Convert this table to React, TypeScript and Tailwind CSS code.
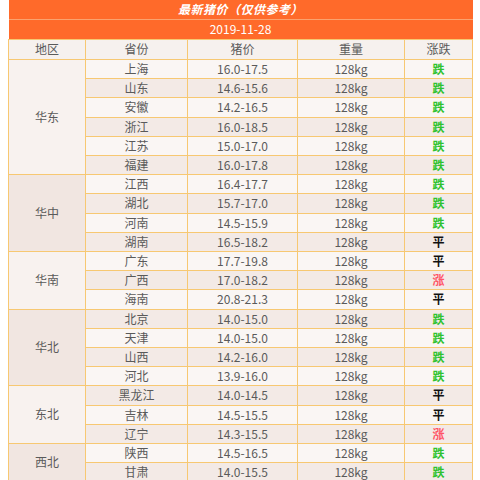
import React from 'react';

type Row = { prov: string; price: string; trend: '跌' | '平' | '涨' };
type Group = { region: string; rows: Row[] };

const groups: Group[] = [
  {
    region: '华东',
    rows: [
      { prov: '上海', price: '16.0-17.5', trend: '跌' },
      { prov: '山东', price: '14.6-15.6', trend: '跌' },
      { prov: '安徽', price: '14.2-16.5', trend: '跌' },
      { prov: '浙江', price: '16.0-18.5', trend: '跌' },
      { prov: '江苏', price: '15.0-17.0', trend: '跌' },
      { prov: '福建', price: '16.0-17.8', trend: '跌' },
    ],
  },
  {
    region: '华中',
    rows: [
      { prov: '江西', price: '16.4-17.7', trend: '跌' },
      { prov: '湖北', price: '15.7-17.0', trend: '跌' },
      { prov: '河南', price: '14.5-15.9', trend: '跌' },
      { prov: '湖南', price: '16.5-18.2', trend: '平' },
    ],
  },
  {
    region: '华南',
    rows: [
      { prov: '广东', price: '17.7-19.8', trend: '平' },
      { prov: '广西', price: '17.0-18.2', trend: '涨' },
      { prov: '海南', price: '20.8-21.3', trend: '平' },
    ],
  },
  {
    region: '华北',
    rows: [
      { prov: '北京', price: '14.0-15.0', trend: '跌' },
      { prov: '天津', price: '14.0-15.0', trend: '跌' },
      { prov: '山西', price: '14.2-16.0', trend: '跌' },
      { prov: '河北', price: '13.9-16.0', trend: '跌' },
    ],
  },
  {
    region: '东北',
    rows: [
      { prov: '黑龙江', price: '14.0-14.5', trend: '平' },
      { prov: '吉林', price: '14.5-15.5', trend: '平' },
      { prov: '辽宁', price: '14.3-15.5', trend: '涨' },
    ],
  },
  {
    region: '西北',
    rows: [
      { prov: '陕西', price: '14.5-16.5', trend: '跌' },
      { prov: '甘肃', price: '14.0-15.5', trend: '跌' },
    ],
  },
];

const trendClass = {
  跌: 'text-[#2fc22f] font-bold',
  平: 'text-[#111111] font-bold',
  涨: 'text-[#ff5566] font-bold',
};

const cell = 'border border-[#f7c872] text-center align-middle p-0';

export default function App() {
  let idx = 0;
  return (
    <div
      className="w-[480px] h-[480px] overflow-hidden bg-white px-[8px]"
      style={{ fontFamily: '"Noto Sans CJK SC", "Noto Sans", sans-serif' }}
    >
      <table className="w-[464px] border-collapse table-fixed text-[12px] leading-none text-[#5a5a5a]">
        <colgroup>
          <col className="w-[77px]" />
          <col className="w-[102px]" />
          <col className="w-[110px]" />
          <col className="w-[107px]" />
          <col className="w-[68px]" />
        </colgroup>
        <tbody>
          <tr className="h-[19px]">
            <td
              colSpan={5}
              className="bg-[#ff6a2a] text-white text-center font-bold italic tracking-[0.5px] text-[12px] border-b border-[#fba26e]"
            >
              最新猪价（仅供参考）
            </td>
          </tr>
          <tr className="h-[20px]">
            <td colSpan={5} className="bg-[#ff6a2a] text-white text-center text-[12px]">
              2019-11-28
            </td>
          </tr>
          <tr className="h-[20px] bg-[#f6f1ee]">
            <td className={cell}>地区</td>
            <td className={cell}>省份</td>
            <td className={cell}>猪价</td>
            <td className={cell}>重量</td>
            <td className={cell}>涨跌</td>
          </tr>
          {groups.map((g, gi) =>
            g.rows.map((r, ri) => {
              const i = idx++;
              const bg = i % 2 === 1 ? 'bg-[#f3eae6]' : 'bg-[#faf6f4]';
              const h = i % 5 === 2 ? 'h-[20px]' : 'h-[19px]';
              return (
                <tr key={r.prov} className={`${h} ${bg}`}>
                  {ri === 0 && (
                    <td
                      rowSpan={g.rows.length}
                      className={`${cell} ${gi % 2 === 0 ? 'bg-[#f8f2ef]' : 'bg-[#f1e6e1]'}`}
                    >
                      {g.region}
                    </td>
                  )}
                  <td className={cell}>{r.prov}</td>
                  <td className={cell}>{r.price}</td>
                  <td className={cell}>128kg</td>
                  <td className={`${cell} ${trendClass[r.trend]}`}>{r.trend}</td>
                </tr>
              );
            })
          )}
        </tbody>
      </table>
    </div>
  );
}
